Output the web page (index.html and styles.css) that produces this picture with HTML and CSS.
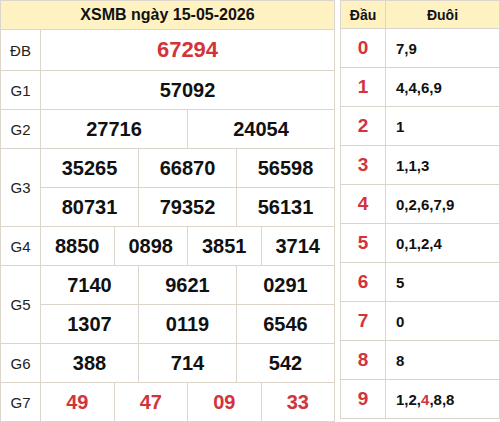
FILE: index.html
```html
<!DOCTYPE html>
<html>
<head>
    <meta charset="utf-8">
    <title>XSMB 15-05-2026</title>
    <link rel="stylesheet" href="styles.css">
</head>
<body>
    <div class="wrap">
        <!-- bảng kết quả -->
        <table class="result">
            <colgroup>
                <col class="c-label">
                <col span="12">
            </colgroup>
            <tr class="head">
                <th colspan="13">XSMB ngày 15-05-2026</th>
            </tr>
            <tr class="db">
                <td class="label">ĐB</td>
                <td colspan="12" class="num red big">67294</td>
            </tr>
            <tr>
                <td class="label">G1</td>
                <td colspan="12" class="num">57092</td>
            </tr>
            <tr>
                <td class="label">G2</td>
                <td colspan="6" class="num">27716</td>
                <td colspan="6" class="num">24054</td>
            </tr>
            <tr>
                <td class="label" rowspan="2">G3</td>
                <td colspan="4" class="num">35265</td>
                <td colspan="4" class="num">66870</td>
                <td colspan="4" class="num">56598</td>
            </tr>
            <tr>
                <td colspan="4" class="num">80731</td>
                <td colspan="4" class="num">79352</td>
                <td colspan="4" class="num">56131</td>
            </tr>
            <tr>
                <td class="label">G4</td>
                <td colspan="3" class="num">8850</td>
                <td colspan="3" class="num">0898</td>
                <td colspan="3" class="num">3851</td>
                <td colspan="3" class="num">3714</td>
            </tr>
            <tr>
                <td class="label" rowspan="2">G5</td>
                <td colspan="4" class="num">7140</td>
                <td colspan="4" class="num">9621</td>
                <td colspan="4" class="num">0291</td>
            </tr>
            <tr>
                <td colspan="4" class="num">1307</td>
                <td colspan="4" class="num">0119</td>
                <td colspan="4" class="num">6546</td>
            </tr>
            <tr>
                <td class="label">G6</td>
                <td colspan="4" class="num">388</td>
                <td colspan="4" class="num">714</td>
                <td colspan="4" class="num">542</td>
            </tr>
            <tr>
                <td class="label">G7</td>
                <td colspan="3" class="num red">49</td>
                <td colspan="3" class="num red">47</td>
                <td colspan="3" class="num red">09</td>
                <td colspan="3" class="num red">33</td>
            </tr>
        </table>

        <!-- bảng đầu đuôi -->
        <table class="loto">
            <tr class="head">
                <th class="dau">Đầu</th>
                <th>Đuôi</th>
            </tr>
            <tr><td class="dau">0</td><td class="duoi">7,9</td></tr>
            <tr><td class="dau">1</td><td class="duoi">4,4,6,9</td></tr>
            <tr><td class="dau">2</td><td class="duoi">1</td></tr>
            <tr><td class="dau">3</td><td class="duoi">1,1,3</td></tr>
            <tr><td class="dau">4</td><td class="duoi">0,2,6,7,9</td></tr>
            <tr><td class="dau">5</td><td class="duoi">0,1,2,4</td></tr>
            <tr><td class="dau">6</td><td class="duoi">5</td></tr>
            <tr><td class="dau">7</td><td class="duoi">0</td></tr>
            <tr><td class="dau">8</td><td class="duoi">8</td></tr>
            <tr><td class="dau">9</td><td class="duoi">1,2,<span class="hl">4</span>,8,8</td></tr>
        </table>
    </div>
</body>
</html>
```

FILE: styles.css
```css
body {
    margin: 0;
    background-color: #fff;
    font-family: "Liberation Sans", Arial, sans-serif;
    color: #111;
}
.wrap {
    display: flex;
    align-items: flex-start;
    gap: 5px;
}
table {
    border-collapse: collapse;
    table-layout: fixed;
}
td, th {
    border: 1px solid #dcd5cc;
    padding: 0;
    text-align: center;
}
.head th {
    background-color: #fff2c2;
    font-weight: bold;
}

/* bảng kết quả */
.result {
    width: 335px;
}
.c-label {
    width: 40px;
}
.result .head th {
    height: 28px;
    font-size: 16px;
}
.result td {
    height: 38px;
}
.result .db td {
    height: 40px;
}
.label {
    font-size: 15px;
    color: #222;
}
.num {
    font-size: 20px;
    font-weight: bold;
}
.num.big {
    font-size: 22px;
}
.red {
    color: #d1343a;
}

/* bảng đầu đuôi */
.loto {
    width: 160px;
}
.loto .head th {
    height: 27px;
    font-size: 14px;
}
.loto th.dau {
    width: 44px;
}
.loto td {
    height: 38px;
}
.loto td.dau {
    font-size: 19px;
    font-weight: bold;
    color: #d1343a;
}
.duoi {
    text-align: left;
    padding-left: 10px;
    font-size: 15px;
    font-weight: bold;
}
.hl {
    color: #d1343a;
}
```
